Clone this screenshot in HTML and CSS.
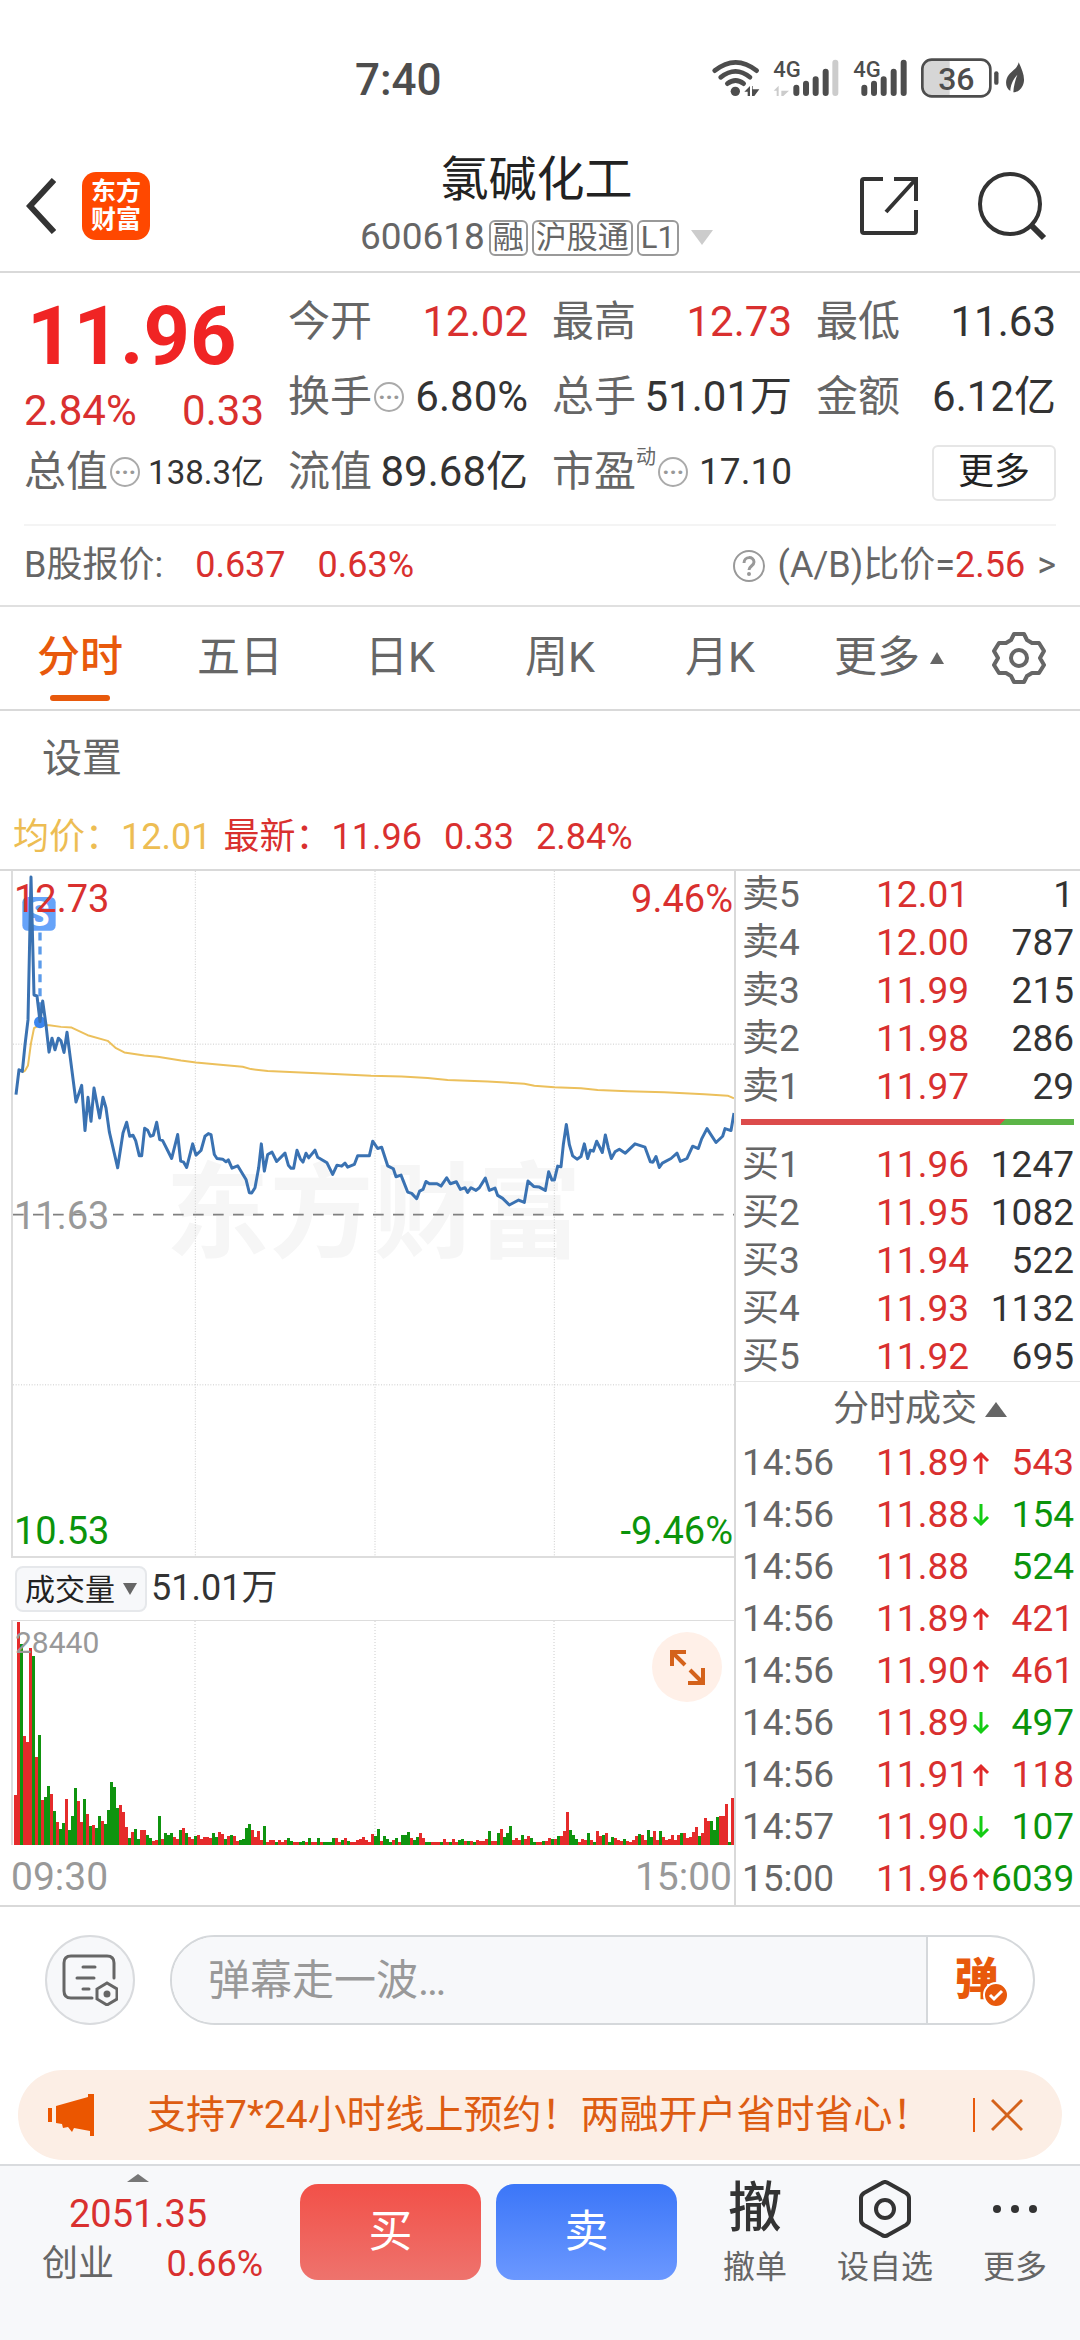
FILE: index.html
```html
<!DOCTYPE html>
<html lang="zh-CN">

<head>
    <meta charset="UTF-8">
    <meta name="viewport" content="width=device-width, initial-scale=1.0">
    <title>氯碱化工 600618</title>
    <link rel="stylesheet" href="styles.css">
</head>

<body>
    <!-- Status bar -->
    <div class="status-bar">
        <span class="clock">7:40</span>
        <svg class="status-icons" viewBox="0 0 1020 180" width="340" height="60">
            <g fill="none" stroke="#4d4d4d" stroke-width="14" stroke-linecap="round">
                <path d="M44 62Q107 12 170 62" />
                <path d="M62 82Q107 46 150 82" />
                <path d="M82 101Q107 82 131 101" />
            </g>
            <circle cx="106" cy="124" r="14" fill="#4d4d4d" />
            <path d="M133 125L150 108V138H143V125ZM158 108V118H178L163 138H156V108Z" fill="#4d4d4d" />
            <text class="net" x="220" y="82">4G</text>
            <path d="M221 122L236 107V138H230V122ZM244 107V122H267L250 138H244Z" fill="#ccc" />
            <g stroke="#4d4d4d" stroke-width="18" stroke-linecap="round">
                <path d="M289 113V129M318 101V129M347 88V129M377 65V129" />
                <path d="M406 38V129" stroke="#ccc" />
                <path d="M493 113V129M522 101V129M551 88V129M581 65V129M611 38V129" />
            </g>
            <text class="net" x="460" y="82">4G</text>
            <path d="M696 30H749V138H696Q669 138 669 110V58Q669 30 696 30Z" fill="#d6d6d6" />
            <rect x="667" y="29" width="204" height="110" rx="28" fill="none" stroke="#4d4d4d" stroke-width="8" />
            <text class="battery" x="769" y="119">36</text>
            <path d="M889 70V98" stroke="#4d4d4d" stroke-width="13" stroke-linecap="round" />
            <path d="M956 37C968 62 978 88 968 107C960 122 950 127 940 127C941 108 946 90 952 74C938 89 931 108 931 123C916 114 914 91 926 75C938 60 952 56 956 37Z" fill="#4d4d4d" />
        </svg>
    </div>

    <!-- Header -->
    <header class="header">
        <div class="header-left">
            <button class="icon-btn" aria-label="返回">
                <svg width="30" height="56" viewBox="0 0 30 56" fill="none" stroke="#333" stroke-width="6">
                    <path d="M28 2L4 28L28 54" />
                </svg>
            </button>
            <a class="logo" href="#home"><span>东方</span><span>财富</span></a>
        </div>
        <div class="stock-title">
            <h1>氯碱化工</h1>
            <div class="stock-code">
                <span class="code">600618</span>
                <span class="badge">融</span>
                <span class="badge">沪股通</span>
                <span class="badge">L1</span>
                <svg class="caret" width="22" height="15" viewBox="0 0 22 15"><path d="M0 0H22L11 15Z" fill="#ccc" /></svg>
            </div>
        </div>
        <div class="header-right">
            <button class="icon-btn" aria-label="分享">
                <svg width="60" height="60" viewBox="0 0 60 60" fill="none" stroke="#333" stroke-width="4">
                    <path d="M24 3H5Q3 3 3 5V55Q3 57 5 57H55Q57 57 57 55V34" />
                    <path d="M35 3H57V25M57 3L27 36" />
                </svg>
            </button>
            <button class="icon-btn" aria-label="搜索">
                <svg width="70" height="70" viewBox="0 0 70 70" fill="none" stroke="#333" stroke-width="4">
                    <circle cx="33" cy="33" r="30" />
                    <path d="M54 54L67 67" stroke-width="6" />
                </svg>
            </button>
        </div>
    </header>

    <!-- Quote -->
    <section class="quote">
        <div class="quote-grid">
            <div class="now">
                <strong class="now-price">11.96</strong>
                <div class="pair red"><span>2.84%</span><span>0.33</span></div>
            </div>
            <div class="pair"><span class="label">今开</span><span class="red">12.02</span></div>
            <div class="pair"><span class="label">最高</span><span class="red">12.73</span></div>
            <div class="pair"><span class="label">最低</span><span>11.63</span></div>
            <div class="pair"><span class="label">换手<i class="more-dots">···</i></span><span>6.80%</span></div>
            <div class="pair"><span class="label">总手</span><span>51.01万</span></div>
            <div class="pair"><span class="label">金额</span><span>6.12亿</span></div>
            <div class="pair"><span class="label">总值<i class="more-dots">···</i></span><span class="xs">138.3亿</span></div>
            <div class="pair"><span class="label">流值</span><span>89.68亿</span></div>
            <div class="pair"><span class="label">市盈<sup>动</sup><i class="more-dots">···</i></span><span class="sm">17.10</span></div>
            <button class="more-btn">更多</button>
        </div>
        <div class="b-share">
            <div class="b-price">
                <span>B股报价:</span>
                <span class="red">0.637</span>
                <span class="red">0.63%</span>
            </div>
            <a class="ratio" href="#ratio">
                <svg width="34" height="34" viewBox="0 0 34 34" fill="none" stroke="#999" stroke-width="2">
                    <circle cx="17" cy="17" r="15" />
                    <path d="M12 14C12 7 22 7 22 13C22 17 17 17 17 21" stroke-width="3" />
                    <circle cx="17" cy="25" r="1" />
                </svg>
                <span>(A/B)比价=<b class="red">2.56</b></span>
                <span class="gt">&gt;</span>
            </a>
        </div>
    </section>

    <!-- Tabs -->
    <nav class="tabs">
        <button class="tab active">分时</button>
        <button class="tab">五日</button>
        <button class="tab">日K</button>
        <button class="tab">周K</button>
        <button class="tab">月K</button>
        <button class="tab">更多<svg width="14" height="12" viewBox="0 0 14 12"><path d="M7 0L14 12H0Z" fill="#666" /></svg></button>
        <button class="tab" aria-label="图表设置">
            <svg width="54" height="54" viewBox="0 0 54 54" fill="none" stroke="#666" stroke-width="4" stroke-linejoin="round">
                <path d="M22 3H32L35 9L40 12L47 12L52 20L48 27L52 34L47 42L40 42L35 45L32 51H22L19 45L14 42L7 42L2 34L6 27L2 20L7 12L14 12L19 9Z" />
                <circle cx="27" cy="27" r="8" />
            </svg>
        </button>
    </nav>
    <div class="settings"><button class="settings-btn">设置</button></div>

    <div class="legend">
        <span class="avg">均价：12.01</span>
        <span class="red">最新：11.96</span>
        <span class="red">0.33</span>
        <span class="red">2.84%</span>
    </div>

    <!-- Chart and order book -->
    <main class="board">
        <div class="charts">
            <div class="price-chart">
                <div class="watermark">东方财富</div>
                <svg class="plot" viewBox="0 0 2163 2061" preserveAspectRatio="none">
                    <g fill="none" stroke="#ccc" stroke-width="3" stroke-dasharray="3 5">
                        <path d="M547 0V2061M1086 0V2061M1624 0V2061M0 521H2163M0 1546H2163" />
                    </g>
                    <path d="M0 1034H2163" stroke="#808080" stroke-width="5" stroke-dasharray="32 28" />
                    <g transform="translate(-36 -27)" fill="none" stroke-linejoin="round">
                        <polyline stroke="#ecc05c" stroke-width="6" points="64,633 72,628 81,612 90,545 99,500 117,490 145,491 180,496 212,498 260,521 320,538 345,560 370,573 430,582 470,586 540,597 585,603 650,609 725,616 750,623 800,629 900,633 1000,638 1110,643 1202,645 1280,650 1340,656 1460,660 1570,667 1600,673 1660,678 1740,681 1790,686 1880,690 1990,693 2110,699 2180,703 2199,711" />
                        <rect x="64" y="105" width="100" height="102" rx="16" fill="#66a3f9" />
                        <text class="mark-s" x="114" y="192">S</text>
                        <path d="M117 212V480" stroke="#5b9bea" stroke-width="10" stroke-dasharray="24 18" />
                        <circle cx="117" cy="482" r="18" fill="#3c86ee" />
                        <polyline stroke="#3a72b2" stroke-width="9" points="45,700 54,625 64,630 72,550 81,475 90,45 99,400 108,403 117,480 125,418 135,490 144,572 153,530 162,565 172,530 180,538 189,573 198,512 208,590 225,722 242,672 252,808 261,708 270,780 279,680 296,770 306,708 315,740 325,812 350,920 366,815 377,783 386,825 396,822 404,838 415,884 422,884 431,801 440,807 448,825 457,822 467,783 476,835 485,838 512,892 530,820 539,900 548,903 557,919 575,848 585,882 600,868 612,825 622,817 630,820 640,880 648,892 665,894 675,902 682,896 693,921 710,914 735,955 745,995 752,996 762,980 773,920 781,848 790,930 800,880 813,873 827,901 852,876 862,912 870,921 878,921 888,867 898,893 906,903 915,876 923,890 942,867 950,888 978,905 995,940 1008,912 1022,915 1032,906 1040,918 1060,910 1070,884 1105,884 1115,840 1130,862 1142,858 1160,914 1177,923 1185,947 1200,942 1220,993 1232,997 1247,1013 1256,990 1266,985 1275,961 1285,968 1308,968 1320,975 1337,950 1348,968 1366,962 1378,985 1392,980 1400,994 1410,980 1425,988 1435,980 1453,951 1465,988 1482,981 1490,1003 1505,1012 1525,1032 1553,1017 1570,1024 1581,960 1598,976 1615,978 1633,988 1643,932 1653,957 1660,957 1670,915 1680,917 1687,850 1696,790 1705,850 1715,884 1728,894 1740,886 1750,848 1760,892 1768,867 1777,870 1787,840 1804,874 1813,821 1822,860 1831,892 1842,872 1855,864 1873,876 1902,848 1932,858 1948,902 1956,903 1965,886 1975,919 1984,906 2010,892 2028,876 2038,901 2058,892 2075,855 2092,862 2102,833 2118,802 2145,844 2165,825 2172,802 2190,808 2199,755" />
                    </g>
                </svg>
                <span class="mark top-left red">12.73</span>
                <span class="mark top-right red">9.46%</span>
                <span class="mark mid-left">11.63</span>
                <span class="mark bottom-left green">10.53</span>
                <span class="mark bottom-right green">-9.46%</span>
            </div>
            <div class="volume-head">
                <select class="indicator" aria-label="指标">
                    <option>成交量</option>
                </select>
                <span>51.01万</span>
            </div>
            <div class="volume-chart">
                <svg class="plot" id="volume" viewBox="0 0 721 224" preserveAspectRatio="none">
                    <path d="M182 0V224M362 0V224M541 0V224" fill="none" stroke="#ccc" stroke-dasharray="1 2" />
                </svg>
                <span class="volume-max">28440</span>
                <button class="expand" aria-label="全屏">
                    <svg width="36" height="36" viewBox="0 0 36 36" fill="none" stroke="#d4621b" stroke-width="4">
                        <path d="M17 3H3V17M3 3L16 16M19 34H34V19M34 34L21 21" />
                    </svg>
                </button>
            </div>
            <div class="time-axis"><span>09:30</span><span>15:00</span></div>
        </div>

        <div class="book">
            <table class="depth">
                <tr><th>卖5</th><td class="red">12.01</td><td>1</td></tr>
                <tr><th>卖4</th><td class="red">12.00</td><td>787</td></tr>
                <tr><th>卖3</th><td class="red">11.99</td><td>215</td></tr>
                <tr><th>卖2</th><td class="red">11.98</td><td>286</td></tr>
                <tr><th>卖1</th><td class="red">11.97</td><td>29</td></tr>
            </table>
            <div class="ratio-bar"></div>
            <table class="depth">
                <tr><th>买1</th><td class="red">11.96</td><td>1247</td></tr>
                <tr><th>买2</th><td class="red">11.95</td><td>1082</td></tr>
                <tr><th>买3</th><td class="red">11.94</td><td>522</td></tr>
                <tr><th>买4</th><td class="red">11.93</td><td>1132</td></tr>
                <tr><th>买5</th><td class="red">11.92</td><td>695</td></tr>
            </table>
            <button class="deals-title">分时成交<svg width="22" height="15" viewBox="0 0 22 15"><path d="M11 0L22 15H0Z" fill="#666" /></svg></button>
            <table class="deals">
                <tr><th>14:56</th><td class="red">11.89</td><td class="up"></td><td class="red">543</td></tr>
                <tr><th>14:56</th><td class="red">11.88</td><td class="down"></td><td class="green">154</td></tr>
                <tr><th>14:56</th><td class="red">11.88</td><td></td><td class="green">524</td></tr>
                <tr><th>14:56</th><td class="red">11.89</td><td class="up"></td><td class="red">421</td></tr>
                <tr><th>14:56</th><td class="red">11.90</td><td class="up"></td><td class="red">461</td></tr>
                <tr><th>14:56</th><td class="red">11.89</td><td class="down"></td><td class="green">497</td></tr>
                <tr><th>14:56</th><td class="red">11.91</td><td class="up"></td><td class="red">118</td></tr>
                <tr><th>14:57</th><td class="red">11.90</td><td class="down"></td><td class="green">107</td></tr>
                <tr><th>15:00</th><td class="red">11.96</td><td class="up"></td><td class="green">6039</td></tr>
            </table>
        </div>
    </main>

    <!-- Comment box -->
    <div class="comment">
        <button class="comment-set" aria-label="弹幕设置">
            <svg width="56" height="52" viewBox="0 0 56 52" fill="none" stroke="#666" stroke-width="3" stroke-linecap="round">
                <path d="M30 44H9Q2 44 2 37V9Q2 2 9 2H45Q52 2 52 9V24" />
                <path d="M21 13H33M15 24H32M21 35H27" />
                <path d="M45 29L55 35V45L45 51L35 45V35Z" />
                <circle cx="45" cy="40" r="2" fill="#666" />
            </svg>
        </button>
        <div class="comment-box">
            <input type="text" placeholder="弹幕走一波…" aria-label="弹幕">
            <button class="danmu" aria-label="弹幕开关"><span>弹</span>
                <svg width="26" height="26" viewBox="0 0 26 26">
                    <circle cx="13" cy="13" r="12" fill="#e8590c" stroke="#fff" stroke-width="2" />
                    <path d="M7 13L11 17L19 9" fill="none" stroke="#fff" stroke-width="3" />
                </svg>
            </button>
        </div>
    </div>

    <div class="notice">
        <svg width="46" height="42" viewBox="0 0 46 42" fill="#eb5600">
            <path d="M0 14H4V28H0ZM8 12L40 3V0H46V42H42V37L26 34L24 38L20 33L15 34L14 30L8 29Z" />
        </svg>
        <a href="#open">支持7*24小时线上预约！两融开户省时省心！</a>
        <button class="close" aria-label="关闭">
            <svg width="32" height="34" viewBox="0 0 32 34" fill="none" stroke="#d4621b" stroke-width="3"><path d="M1 2L31 32M31 2L1 32" /></svg>
        </button>
    </div>

    <!-- Bottom bar -->
    <footer class="bottom-bar">
        <a class="index" href="#index">
            <svg width="22" height="8" viewBox="0 0 22 8"><path d="M11 0L22 8H0Z" fill="#777" /></svg>
            <span class="index-value">2051.35</span>
            <span class="index-row"><span>创业</span><span class="red">0.66%</span></span>
        </a>
        <button class="trade buy">买</button>
        <button class="trade sell">卖</button>
        <button class="action"><span class="action-icon">撤</span>撤单</button>
        <button class="action wide">
            <span class="action-icon">
                <svg width="54" height="58" viewBox="0 0 54 58" fill="none" stroke="#333" stroke-width="4" stroke-linejoin="round">
                    <path d="M24 3Q27 1 30 3L48 13Q51 15 51 18V40Q51 43 48 45L30 55Q27 57 24 55L6 45Q3 43 3 40V18Q3 15 6 13Z" />
                    <circle cx="27" cy="29" r="9" />
                </svg>
            </span>设自选
        </button>
        <button class="action">
            <span class="action-icon">
                <svg width="46" height="10" viewBox="0 0 46 10" fill="#333"><circle cx="5" cy="5" r="4" /><circle cx="23" cy="5" r="4" /><circle cx="41" cy="5" r="4" /></svg>
            </span>更多
        </button>
    </footer>

    <script src="script.js"></script>
</body>

</html>
```
FILE: script.js
```js
// One entry per minute: bar height and colour (r = up, g = down)
const volumes = "50r 223r 201g 109r 103r 197r 189g 88r 110g 45r 48g 59g 51r 34g 23r 16g 22g 46r 15g 29g " +
    "57g 44r 23r 46g 31r 19g 20r 17g 29g 24r 21g 35g 63g 58g 37g 40r 33r 18r 7g 13r " +
    "16g 6g 15r 15r 10g 7g 4r 5r 29g 6r 12g 10g 12g 8r 6r 15g 17r 12g 8r 6r " +
    "9g 10r 6r 8r 8r 7r 12g 8g 13r 11r 6g 9r 10g 9r 4r 5g 6g 17g 21g 15r " +
    "8r 14r 5r 19g 3r 5r 5r 3g 5r 3r 5r 7g 4g 3r 3r 3g 4g 3r 7g 3r " +
    "3r 7g 3r 3g 3g 3g 7g 7r 3r 5g 7r 4g 3r 3r 5r 6r 8r 5r 3r 11r " +
    "9g 16g 4r 9g 6g 3g 5r 7g 3r 10g 10g 13g 7r 5g 8g 12r 7r 3g 3g 3r " +
    "3r 3r 3g 6r 3r 3g 6r 3r 5g 6g 4r 4g 4r 3g 5r 4r 4r 6r 14g 4r " +
    "4r 12g 16r 8g 12g 19g 5r 7r 5r 10g 6r 9r 7g 3g 3r 3r 4g 4r 7r 6g " +
    "6r 9g 9r 14r 33r 15g 10g 6g 3r 6r 5r 12g 5r 3g 14r 9r 10g 12r 3g 8g " +
    "7r 5r 4r 6g 4r 3r 5r 9r 11g 10r 5r 15g 8g 14r 5r 14g 8r 5r 6r 10r " +
    "5r 10r 12g 12r 7r 8r 13r 18r 9g 12r 27r 24r 24g 15g 28g 29r 29r 41r 3g 47r";

const svg = document.getElementById("volume");
const paths = { r: "", g: "" };

volumes.split(" ").forEach((item, i) => {
    const height = parseInt(item);
    paths[item.slice(-1)] += `M${i * 3 + 1} ${224 - height}h3v${height}h-3z`;
});

for (const key in paths) {
    const path = document.createElementNS("http://www.w3.org/2000/svg", "path");
    path.setAttribute("d", paths[key]);
    path.setAttribute("class", "bar-" + key);
    svg.appendChild(path);
}
```
FILE: styles.css
```css
* {
    box-sizing: border-box;
}

body {
    margin: 0;
    min-height: 100vh;
    display: flex;
    flex-direction: column;
    font-family: Roboto, "Noto Sans CJK SC", sans-serif;
    font-size: 36px;
    line-height: 1.2;
    color: #333;
    background-color: #fff;
}

button {
    font: inherit;
    color: inherit;
    background: none;
    border: none;
    padding: 0;
    cursor: pointer;
}

a {
    color: inherit;
    text-decoration: none;
}

svg {
    display: block;
    flex-shrink: 0;
}

.red {
    color: #d9302f;
}

.green {
    color: #0b940b;
}

/* Status bar */
.status-bar {
    height: 140px;
    padding: 30px 40px 0 355px;
    display: flex;
    justify-content: space-between;
    align-items: flex-start;
}

.clock {
    font-size: 44px;
    line-height: 100px;
    font-weight: 500;
    color: #4d4d4d;
}

.status-icons {
    margin-top: 20px;
}

.net {
    font-size: 66px;
    font-weight: 500;
    fill: #4d4d4d;
}

.battery {
    font-size: 96px;
    font-weight: 500;
    fill: #4d4d4d;
    text-anchor: middle;
}

/* Header */
.header {
    height: 133px;
    padding: 0 33px 0 26px;
    display: grid;
    grid-template-columns: 1fr auto 1fr;
    align-items: center;
    border-bottom: 2px solid #d9d9d9;
}

.header-left,
.header-right {
    display: flex;
    align-items: center;
    gap: 26px;
}

.header-right {
    justify-content: flex-end;
    gap: 58px;
}

.logo {
    width: 68px;
    height: 68px;
    display: flex;
    flex-direction: column;
    align-items: center;
    justify-content: center;
    border-radius: 14px;
    background-color: #ff4800;
    color: #fff;
    font-size: 25px;
    line-height: 28px;
    font-weight: bold;
}

.stock-title {
    display: flex;
    flex-direction: column;
    align-items: center;
}

.stock-title h1 {
    margin: 0;
    font-size: 48px;
    line-height: 64px;
    font-weight: normal;
    color: #222;
}

.stock-code {
    display: flex;
    align-items: center;
    gap: 4px;
    height: 52px;
    color: #666;
}

.code {
    font-size: 37px;
}

.badge {
    padding: 0 2px;
    border: 2px solid #999;
    border-radius: 6px;
    font-size: 31px;
    line-height: 32px;
}

.caret {
    margin-left: 8px;
}

/* Quote */
.quote {
    padding: 12px 24px 0;
    border-bottom: 2px solid #e0e0e0;
}

.quote-grid {
    display: grid;
    grid-template-columns: repeat(4, 1fr);
    grid-auto-rows: 75px;
    column-gap: 24px;
    height: 239px;
    font-size: 42px;
}

.pair {
    display: flex;
    justify-content: space-between;
    align-items: center;
    white-space: nowrap;
}

.label {
    display: flex;
    align-items: center;
    color: #666;
}

.label sup {
    align-self: flex-start;
    font-size: 20px;
    line-height: 20px;
}

.now {
    grid-row: span 2;
    display: flex;
    flex-direction: column;
    justify-content: flex-end;
}

.now-price {
    padding-left: 3px;
    font-size: 81px;
    line-height: 100px;
    font-weight: bold;
    color: #f02424;
}

.now .pair {
    line-height: 48px;
}

.more-dots {
    width: 30px;
    height: 30px;
    margin-left: 2px;
    border: 2px solid #aaa;
    border-radius: 50%;
    font-size: 24px;
    line-height: 26px;
    font-style: normal;
    font-weight: bold;
    text-align: center;
    color: #999;
}

.sm {
    font-size: 37px;
}

.xs {
    font-size: 33px;
}

.more-btn {
    justify-self: end;
    align-self: center;
    width: 124px;
    height: 56px;
    border: 2px solid #e6e6e6;
    border-radius: 6px;
    font-size: 36px;
    color: #222;
}

.b-share {
    height: 81px;
    display: flex;
    justify-content: space-between;
    align-items: center;
    border-top: 2px solid #f4f4f4;
    color: #666;
}

.b-price {
    display: flex;
    gap: 32px;
}

.ratio {
    display: flex;
    align-items: center;
    gap: 12px;
}

.ratio b {
    font-weight: normal;
}

/* Tabs */
.tabs {
    height: 104px;
    padding-right: 20px;
    display: grid;
    grid-template-columns: repeat(5, 160fr) 178fr 82fr;
    border-bottom: 2px solid #d9d9d9;
    font-size: 43px;
    color: #666;
}

.tab {
    position: relative;
    display: flex;
    align-items: center;
    justify-content: center;
    gap: 10px;
}

.tab.active {
    color: #e8590c;
    font-weight: 500;
}

.tab.active::after {
    content: "";
    position: absolute;
    bottom: 8px;
    width: 60px;
    height: 6px;
    border-radius: 3px;
    background-color: #e8590c;
}

.settings {
    height: 96px;
    padding-left: 42px;
    display: flex;
    align-items: center;
    color: #666;
}

.settings-btn {
    font-size: 40px;
}

.legend {
    height: 62px;
    padding-left: 13px;
    display: flex;
    align-items: center;
    gap: 22px;
}

.legend .avg {
    margin-right: -10px;
    color: #edbd53;
}

/* Board */
.board {
    display: grid;
    grid-template-columns: 736fr 344fr;
    border-top: 2px solid #d9d9d9;
    border-bottom: 2px solid #d9d9d9;
}

.charts {
    padding-left: 11px;
    border-right: 2px solid #d9d9d9;
}

.price-chart,
.volume-chart {
    position: relative;
    height: 687px;
    border-left: 2px solid #ddd;
    border-bottom: 2px solid #ddd;
}

.plot {
    position: absolute;
    inset: 0;
    width: 100%;
    height: 100%;
}

.mark-s {
    font-size: 104px;
    font-weight: bold;
    fill: #fff;
    text-anchor: middle;
}

.watermark {
    position: absolute;
    top: 282px;
    width: 100%;
    text-align: center;
    font-size: 104px;
    font-weight: bold;
    color: #f6f6f6;
}

.mark {
    position: absolute;
    font-size: 38px;
    line-height: 50px;
}

.top-left {
    top: 3px;
    left: 1px;
}

.top-right {
    top: 3px;
    right: 1px;
}

.mid-left {
    top: 320px;
    left: 1px;
    color: #999;
}

.bottom-left {
    bottom: 0;
    left: 1px;
}

.bottom-right {
    bottom: 0;
    right: 1px;
}

.volume-head {
    height: 62px;
    padding-left: 4px;
    display: flex;
    align-items: center;
    gap: 4px;
}

.indicator {
    appearance: none;
    width: 132px;
    height: 46px;
    padding: 0 8px;
    border: 2px solid #e6e8eb;
    border-radius: 8px;
    background: #f7f8fa url("data:image/svg+xml,%3Csvg xmlns='http://www.w3.org/2000/svg' viewBox='0 0 14 12'%3E%3Cpath d='M0 0H14L7 12Z' fill='%23666'/%3E%3C/svg%3E") no-repeat right 8px center / 14px 12px;
    font-family: inherit;
    font-size: 30px;
    color: #222;
}

.volume-chart {
    height: 225px;
    border-top: 1px solid #ddd;
    border-bottom: none;
}

.bar-r {
    fill: #e52b2b;
}

.bar-g {
    fill: #0f940f;
}

.volume-max {
    position: absolute;
    top: 4px;
    left: 2px;
    font-size: 30px;
    color: #999;
}

.expand {
    position: absolute;
    top: 11px;
    right: 12px;
    width: 70px;
    height: 70px;
    display: flex;
    align-items: center;
    justify-content: center;
    border-radius: 50%;
    background-color: #fff0e8;
}

.time-axis {
    height: 60px;
    display: flex;
    justify-content: space-between;
    align-items: center;
    padding: 4px 2px 0 0;
    font-size: 39px;
    color: #999;
}

.book {
    display: flex;
    flex-direction: column;
}

.depth,
.deals {
    width: 100%;
    border-collapse: collapse;
    table-layout: fixed;
    font-size: 37px;
    line-height: 40px;
}

.depth {
    height: 240px;
}

.depth th,
.depth td,
.deals th,
.deals td {
    padding: 0;
    text-align: right;
    font-weight: normal;
}

.depth th,
.deals th {
    width: 116px;
    padding-left: 6px;
    text-align: left;
    color: #666;
}

.depth td:nth-child(2),
.deals td:nth-child(2) {
    width: 117px;
}

.depth td:last-child,
.deals td:last-child {
    padding-right: 6px;
}

.ratio-bar {
    height: 6px;
    margin: 8px 6px 16px 5px;
    background: linear-gradient(135deg, #dc4b4b 78%, #5cb548 78%);
}

.deals-title {
    height: 56px;
    display: flex;
    align-items: center;
    justify-content: center;
    gap: 8px;
    padding-left: 24px;
    border-top: 1px solid #e6e6e6;
    color: #666;
}

.deals {
    height: 468px;
}

.deals td:nth-child(3) {
    width: 22px;
}

.deals .up::before,
.deals .down::before {
    content: "";
    display: block;
    width: 18px;
    height: 24px;
    margin-left: 3px;
    background: url("data:image/svg+xml,%3Csvg xmlns='http://www.w3.org/2000/svg' viewBox='0 0 18 24'%3E%3Cpath d='M9 23V3M2 10L9 3L16 10' fill='none' stroke='%23e02a2a' stroke-width='3'/%3E%3C/svg%3E") center / 18px 24px no-repeat;
}

.deals .down::before {
    background-image: url("data:image/svg+xml,%3Csvg xmlns='http://www.w3.org/2000/svg' viewBox='0 0 18 24'%3E%3Cpath d='M9 1V21M2 14L9 21L16 14' fill='none' stroke='%2314cc14' stroke-width='3'/%3E%3C/svg%3E");
}

/* Comment box */
.comment {
    padding: 28px 45px 45px;
    display: flex;
    gap: 35px;
}

.comment-set {
    width: 90px;
    height: 90px;
    display: flex;
    align-items: center;
    justify-content: center;
    border: 2px solid #d9dbde;
    border-radius: 50%;
    background-color: #f7f8fa;
}

.comment-box {
    flex: 1;
    height: 90px;
    display: flex;
    border: 2px solid #d5d8db;
    border-radius: 45px;
    overflow: hidden;
}

.comment-box input {
    flex: 1;
    min-width: 0;
    padding: 0 36px;
    border: none;
    border-right: 2px solid #d5d8db;
    background-color: #f7f8fa;
    font-family: inherit;
    font-size: 42px;
}

.comment-box input::placeholder {
    color: #999;
}

.danmu {
    position: relative;
    width: 105px;
    padding-right: 8px;
    font-size: 44px;
    font-weight: 900;
    color: #e8590c;
}

.danmu svg {
    position: absolute;
    right: 24px;
    bottom: 15px;
}

/* Notice */
.notice {
    height: 90px;
    margin: 0 18px 4px;
    padding: 0 39px 0 30px;
    display: flex;
    align-items: center;
    border-radius: 45px;
    background-color: #fceee5;
    color: #dd5c12;
    font-size: 39px;
}

.notice a {
    flex: 1;
    margin-left: 53px;
    white-space: nowrap;
}

.close {
    padding-left: 16px;
    border-left: 2px solid #e8590c;
}

/* Bottom bar */
.bottom-bar {
    flex: 1;
    padding: 8px 18px 0 42px;
    display: flex;
    align-items: flex-start;
    border-top: 2px solid #d9dbde;
    background-color: #f7f8fa;
}

.index {
    width: 221px;
    display: flex;
    flex-direction: column;
    color: #666;
}

.index svg {
    margin-left: 85px;
}

.index-value {
    padding-left: 27px;
    font-size: 38px;
    line-height: 64px;
    color: #d9302f;
}

.index-row {
    display: flex;
    justify-content: space-between;
    line-height: 36px;
}

.trade {
    flex: 1;
    height: 96px;
    margin: 10px 0 0 15px;
    border-radius: 18px;
    font-size: 44px;
    color: #fff;
}

.trade.buy {
    margin-left: 37px;
    background: linear-gradient(#f25048, #ee736d);
}

.trade.sell {
    margin-right: 31px;
    background: linear-gradient(#3b76f8, #6b98ff);
}

.action {
    width: 94px;
    display: flex;
    flex-direction: column;
    align-items: center;
    font-size: 32px;
    line-height: 40px;
    color: #666;
}

.action.wide {
    width: 166px;
}

.action-icon {
    height: 73px;
    display: flex;
    align-items: center;
    padding-bottom: 4px;
    font-size: 54px;
    font-weight: 500;
    color: #333;
}
```
